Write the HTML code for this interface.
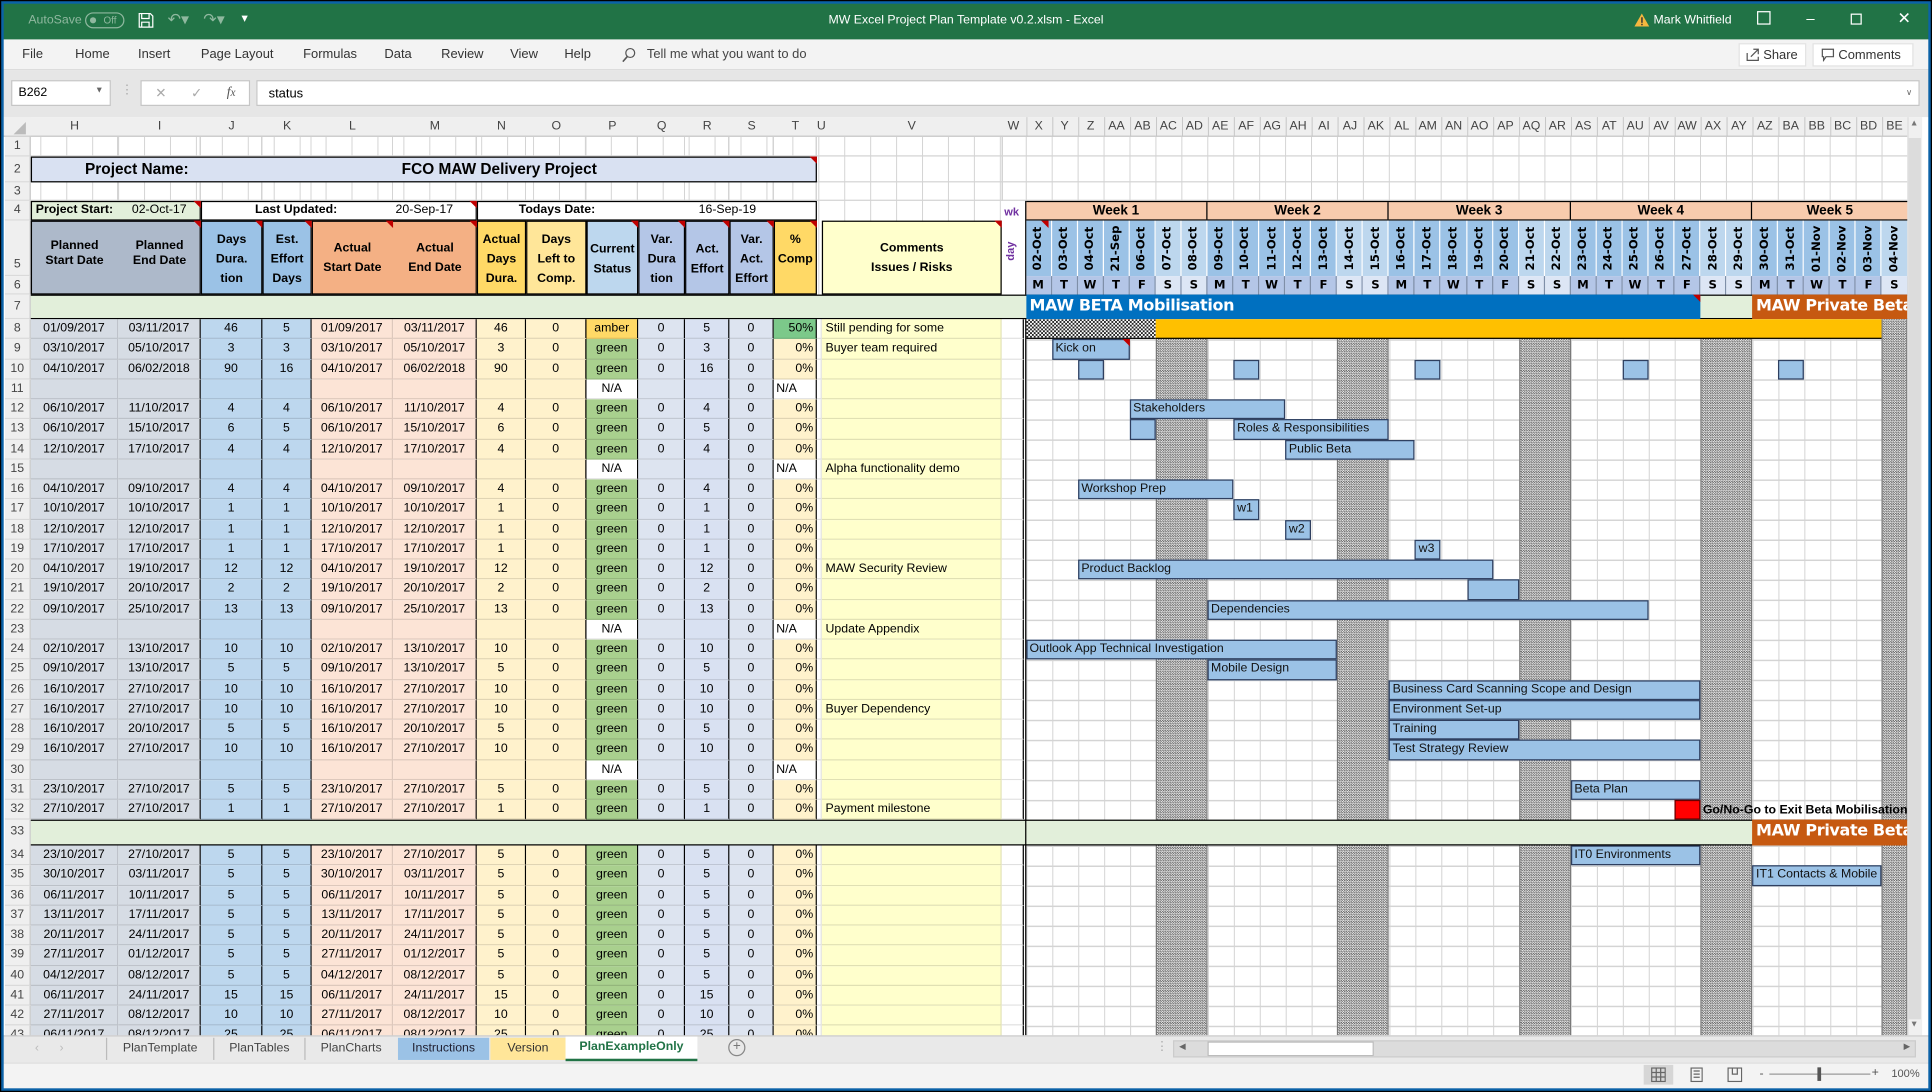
<!DOCTYPE html>
<html><head><meta charset="utf-8">
<style>
*{box-sizing:border-box;margin:0;padding:0}
html,body{width:1932px;height:1092px;overflow:hidden;background:#0b5a9c}
#w{position:absolute;left:0;top:0;width:1568px;height:886px;transform:scale(1.23214,1.23251);transform-origin:0 0;font-family:"Liberation Sans",sans-serif;color:#000;background:#fff;overflow:hidden}
.a{position:absolute}
#frame{left:0;top:0;width:1568px;height:886px;border:3px solid #0b62a8;outline:1px solid #000;outline-offset:-1px;pointer-events:none;z-index:50}
#tb{left:0;top:0;width:1568px;height:32px;background:#217346;color:#fff;font-size:10px}
#rib{left:0;top:32px;width:1568px;height:25px;background:#f3f3f3;font-size:10.5px;color:#333;border-bottom:1px solid #dcdcdc}
#fb{left:0;top:57px;width:1568px;height:38px;background:#e6e6e6}
.box{background:#fff;border:1px solid #c6c6c6}
#ch{left:0;top:95px;width:1548px;height:16px;background:#efefef;border-bottom:1px solid #c6c6c6;font-size:10px;color:#444}
#ch span{position:absolute;top:2px;text-align:center}
.rn{position:absolute;left:4px;width:21px;background:#efefef;font-size:10px;color:#444;text-align:center;border-right:1px solid #c6c6c6;border-bottom:1px solid #dadada}
.r{position:absolute;left:4px;height:16.25px;display:flex;font-size:10px;line-height:16px}
.r i{font-style:normal;text-align:center;white-space:nowrap;overflow:hidden;height:100%;border-bottom:1px solid rgba(0,0,0,.12);border-right:1px solid rgba(0,0,0,.12)}
.r i:nth-child(1){width:21px;background:#efefef;color:#444;border-right:1px solid #c6c6c6;border-bottom:1px solid #dadada}
.r i:nth-child(2){width:71px;background:#d6dce4}
.r i:nth-child(3){width:67px;background:#d6dce4;border-right:1px solid #000}
.r i:nth-child(4){width:50px;background:#bdd7ee;border-right:1px solid #000}
.r i:nth-child(5){width:40px;background:#bdd7ee;border-right:1px solid #000}
.r i:nth-child(6){width:66px;background:#fce4d6}
.r i:nth-child(7){width:68px;background:#fce4d6;border-right:1px solid #000}
.r i:nth-child(8){width:40px;background:#fff2cc;border-right:1px solid #000}
.r i:nth-child(9){width:49px;background:#fff2cc;border-right:1px solid #000}
.r i:nth-child(10){width:42px;background:#a9d08e;border-right:1px solid #000}
.r i:nth-child(11){width:38px;background:#dde4f0;border-right:1px solid #000}
.r i:nth-child(12){width:36px;background:#d9e1f2;border-right:1px solid #000}
.r i:nth-child(13){width:36px;background:#dde4f0;border-right:1px solid #000}
.r i:nth-child(14){width:35px;background:#fff2cc;text-align:right;padding-right:2px;border-right:1px solid #000}
.r i:nth-child(15){width:4px;background:#fff}
.r i:nth-child(16){width:146px;background:#ffffcc;text-align:left;padding-left:3px}
.r i:nth-child(17){width:18px;background:#fff;border-right:1px solid #000}
.r i.na{background:#fff}
.r i.l{text-align:left;padding-left:2px}
.r i.am{background:#ffd966}
.r i.pc{background:#7cc98a}
#gg{left:832.5px;width:715.5px;background-color:#fff;background-image:linear-gradient(90deg,#d4d4d4 1px,transparent 1px),linear-gradient(#d4d4d4 1px,transparent 1px);background-size:21.06px 100%,100% 16.25px}
.we{position:absolute;width:21.06px;background:repeating-conic-gradient(#6a6a6a 0 25%,#e8e8e8 0 50%) 0 0/2px 2px;border-left:1px solid #777;border-right:1px solid #777}
.b{position:absolute;height:16.25px;background:#9bc2e6;border:1px solid #2f3f5f;font-size:10px;line-height:14px;padding-left:2px;white-space:nowrap;overflow:visible;color:#111}
.hd{position:absolute;font-weight:bold;font-size:10px;text-align:center;line-height:1.2}
.dt{position:absolute;top:179px;height:45px;width:21.06px;border-right:1px solid #fff;display:flex;align-items:center;justify-content:center}
.dt span{writing-mode:vertical-rl;transform:rotate(180deg);font-family:"DejaVu Sans",sans-serif;font-weight:bold;font-size:9.5px}
.dl{position:absolute;top:224px;height:15px;width:21.06px;border-right:1px solid #7f8fa8;text-align:center;font-family:"DejaVu Sans",sans-serif;font-weight:bold;font-size:9.5px;line-height:15px}
.tab{position:absolute;top:842px;height:18px;font-size:10px;line-height:18px;text-align:center;color:#444}
</style></head><body><div id="w">

<div id="tb" class="a">
 <span class="a" style="left:23px;top:11px;color:#8fb89f">AutoSave</span>
 <span class="a" style="left:69px;top:10px;width:32px;height:13px;border:1px solid #8fb89f;border-radius:7px;color:#8fb89f;font-size:8px;line-height:11px;padding-left:14px">Off</span>
 <span class="a" style="left:73px;top:14px;width:5px;height:5px;border-radius:50%;background:#8fb89f"></span>
 <svg class="a" style="left:112px;top:10px" width="13" height="13" viewBox="0 0 13 13"><path d="M1 1h9l2 2v9H1z M3 1v4h6V1 M3 12V8h6v4" fill="none" stroke="#fff" stroke-width="1"/></svg>
 <span class="a" style="left:136px;top:8px;font-size:13px;color:#8fb89f">&#x21B6;&#x25BE;</span>
 <span class="a" style="left:165px;top:8px;font-size:13px;color:#8fb89f">&#x21B7;&#x25BE;</span>
 <span class="a" style="left:196px;top:10px;font-size:10px">&#x25BE;</span>
 <span class="a" style="left:0;width:1568px;top:11px;text-align:center">MW Excel Project Plan Template v0.2.xlsm  -  Excel</span>
 <svg class="a" style="left:1326px;top:10px" width="13" height="12"><path d="M6.5 1L12.5 11.5H0.5Z" fill="#f4b73f"/><rect x="6" y="4" width="1.2" height="4.5" fill="#333"/><rect x="6" y="9.3" width="1.2" height="1.2" fill="#333"/></svg>
 <span class="a" style="left:1342px;top:11px">Mark Whitfield</span>
 <span class="a" style="left:1426px;top:9px;width:11px;height:11px;border:1px solid #fff"></span>
 <span class="a" style="left:1466px;top:8px;font-size:12px">&#x2013;</span>
 <span class="a" style="left:1502px;top:11px;width:9px;height:9px;border:1px solid #fff"></span>
 <span class="a" style="left:1540px;top:7px;font-size:13px">&#x2715;</span>
</div>

<div id="rib" class="a">
 <span class="a" style="left:18px;top:6px">File</span>
 <span class="a" style="left:61px;top:6px">Home</span>
 <span class="a" style="left:112px;top:6px">Insert</span>
 <span class="a" style="left:163px;top:6px">Page Layout</span>
 <span class="a" style="left:246px;top:6px">Formulas</span>
 <span class="a" style="left:312px;top:6px">Data</span>
 <span class="a" style="left:358px;top:6px">Review</span>
 <span class="a" style="left:414px;top:6px">View</span>
 <span class="a" style="left:458px;top:6px">Help</span>
 <svg class="a" style="left:504px;top:6px" width="12" height="13"><circle cx="7.5" cy="5" r="3.6" fill="none" stroke="#555"/><path d="M5 8L1.5 12" stroke="#555" stroke-width="1.3"/></svg>
 <span class="a" style="left:525px;top:6px;color:#444">Tell me what you want to do</span>
 <span class="a box" style="left:1411px;top:3px;width:55px;height:19px;padding:3px 0 0 19px;color:#333;border-color:#e2e2e2">Share</span>
 <svg class="a" style="left:1417px;top:7px" width="11" height="11"><path d="M1 4v6h9V7 M4 7l6-6 M6 1h4v4" fill="none" stroke="#555"/></svg>
 <span class="a box" style="left:1471px;top:3px;width:82px;height:19px;padding:3px 0 0 20px;color:#333;border-color:#e2e2e2">Comments</span>
 <svg class="a" style="left:1478px;top:7px" width="11" height="11"><path d="M1 1h9v6H4L2 10V7H1z" fill="none" stroke="#555"/></svg>
</div>

<div id="fb" class="a">
 <div class="a box" style="left:9px;top:8px;width:81px;height:21px;font-size:10px;padding:4px 0 0 5px">B262<span style="position:absolute;right:5px;top:4px;font-size:7px;color:#666">&#x25BC;</span></div>
 <span class="a" style="left:98px;top:11px;color:#aaa;font-size:10px">&#x22EE;</span>
 <div class="a box" style="left:114px;top:8px;width:89px;height:21px;color:#aaa;font-size:11px"><span class="a" style="left:11px;top:3px">&#x2715;</span><span class="a" style="left:40px;top:3px">&#x2713;</span><span class="a" style="left:69px;top:3px;color:#555;font-style:italic;font-family:'Liberation Serif',serif">f<small>x</small></span></div>
 <div class="a box" style="left:208px;top:8px;width:1350px;height:21px;font-size:10.5px;padding:4px 0 0 9px">status<span style="position:absolute;right:5px;top:5px;font-size:7px;color:#666">&#x2228;</span></div>
</div>

<div id="ch" class="a">
 <span style="left:4px;width:21px;height:15px;top:0;background:#efefef"><svg width="12" height="12" style="position:absolute;left:6px;top:3px"><path d="M11 1V11H1Z" fill="#bbb"/></svg></span>
 <span style="left:25px;width:71px">H</span><span style="left:96px;width:67px">I</span><span style="left:163px;width:50px">J</span><span style="left:213px;width:40px">K</span><span style="left:253px;width:66px">L</span><span style="left:319px;width:68px">M</span><span style="left:387px;width:40px">N</span><span style="left:427px;width:49px">O</span><span style="left:476px;width:42px">P</span><span style="left:518px;width:38px">Q</span><span style="left:556px;width:36px">R</span><span style="left:592px;width:36px">S</span><span style="left:628px;width:35px">T</span><span style="left:663px;width:4px">U</span><span style="left:667px;width:146px">V</span><span style="left:813px;width:19px">W</span>
 <div class="a" style="left:832.5px;top:0;display:flex;height:16px;background-image:linear-gradient(90deg,#c6c6c6 1px,transparent 1px);background-size:21.06px 100%;width:716px">
 <b style="font-weight:normal;width:21.06px;text-align:center;padding-top:2px">X</b><b style="font-weight:normal;width:21.06px;text-align:center;padding-top:2px">Y</b><b style="font-weight:normal;width:21.06px;text-align:center;padding-top:2px">Z</b><b style="font-weight:normal;width:21.06px;text-align:center;padding-top:2px">AA</b><b style="font-weight:normal;width:21.06px;text-align:center;padding-top:2px">AB</b><b style="font-weight:normal;width:21.06px;text-align:center;padding-top:2px">AC</b><b style="font-weight:normal;width:21.06px;text-align:center;padding-top:2px">AD</b><b style="font-weight:normal;width:21.06px;text-align:center;padding-top:2px">AE</b><b style="font-weight:normal;width:21.06px;text-align:center;padding-top:2px">AF</b><b style="font-weight:normal;width:21.06px;text-align:center;padding-top:2px">AG</b><b style="font-weight:normal;width:21.06px;text-align:center;padding-top:2px">AH</b><b style="font-weight:normal;width:21.06px;text-align:center;padding-top:2px">AI</b><b style="font-weight:normal;width:21.06px;text-align:center;padding-top:2px">AJ</b><b style="font-weight:normal;width:21.06px;text-align:center;padding-top:2px">AK</b><b style="font-weight:normal;width:21.06px;text-align:center;padding-top:2px">AL</b><b style="font-weight:normal;width:21.06px;text-align:center;padding-top:2px">AM</b><b style="font-weight:normal;width:21.06px;text-align:center;padding-top:2px">AN</b><b style="font-weight:normal;width:21.06px;text-align:center;padding-top:2px">AO</b><b style="font-weight:normal;width:21.06px;text-align:center;padding-top:2px">AP</b><b style="font-weight:normal;width:21.06px;text-align:center;padding-top:2px">AQ</b><b style="font-weight:normal;width:21.06px;text-align:center;padding-top:2px">AR</b><b style="font-weight:normal;width:21.06px;text-align:center;padding-top:2px">AS</b><b style="font-weight:normal;width:21.06px;text-align:center;padding-top:2px">AT</b><b style="font-weight:normal;width:21.06px;text-align:center;padding-top:2px">AU</b><b style="font-weight:normal;width:21.06px;text-align:center;padding-top:2px">AV</b><b style="font-weight:normal;width:21.06px;text-align:center;padding-top:2px">AW</b><b style="font-weight:normal;width:21.06px;text-align:center;padding-top:2px">AX</b><b style="font-weight:normal;width:21.06px;text-align:center;padding-top:2px">AY</b><b style="font-weight:normal;width:21.06px;text-align:center;padding-top:2px">AZ</b><b style="font-weight:normal;width:21.06px;text-align:center;padding-top:2px">BA</b><b style="font-weight:normal;width:21.06px;text-align:center;padding-top:2px">BB</b><b style="font-weight:normal;width:21.06px;text-align:center;padding-top:2px">BC</b><b style="font-weight:normal;width:21.06px;text-align:center;padding-top:2px">BD</b><b style="font-weight:normal;width:21.06px;text-align:center;padding-top:2px">BE</b>
 </div>
</div>

<div class="a" style="left:25px;top:111px;width:1523px;height:128px;background-image:linear-gradient(90deg,#d4d4d4 1px,transparent 1px);background-size:21.06px 100%;background-position:807.5px 0"></div>
<div class="a" style="left:25px;top:111px;width:808px;height:52px;background:linear-gradient(90deg,transparent 70px,#d4d4d4 70px,#d4d4d4 71px,transparent 71px,transparent 137px,#d4d4d4 137px,#d4d4d4 138px,transparent 138px,transparent 187px,#d4d4d4 187px,#d4d4d4 188px,transparent 188px,transparent 227px,#d4d4d4 227px,#d4d4d4 228px,transparent 228px,transparent 293px,#d4d4d4 293px,#d4d4d4 294px,transparent 294px,transparent 361px,#d4d4d4 361px,#d4d4d4 362px,transparent 362px,transparent 401px,#d4d4d4 401px,#d4d4d4 402px,transparent 402px,transparent 450px,#d4d4d4 450px,#d4d4d4 451px,transparent 451px,transparent 492px,#d4d4d4 492px,#d4d4d4 493px,transparent 493px,transparent 530px,#d4d4d4 530px,#d4d4d4 531px,transparent 531px,transparent 566px,#d4d4d4 566px,#d4d4d4 567px,transparent 567px,transparent 602px,#d4d4d4 602px,#d4d4d4 603px,transparent 603px,transparent 637px,#d4d4d4 637px,#d4d4d4 638px,transparent 638px,transparent 788px,#d4d4d4 788px,#d4d4d4 789px,transparent 789px)"></div>
<div class="a" style="left:25px;top:126px;width:1523px;height:1px;background:#d4d4d4"></div>
<div class="a" style="left:25px;top:147px;width:1523px;height:1px;background:#d4d4d4"></div>
<div class="a" style="left:25px;top:162px;width:1523px;height:1px;background:#d4d4d4"></div>

<div class="rn" style="top:111px;height:16px;line-height:16px">1</div>
<div class="rn" style="top:127px;height:21px;line-height:21px">2</div>
<div class="rn" style="top:148px;height:15px;line-height:15px">3</div>
<div class="rn" style="top:163px;height:16px;line-height:16px">4</div>
<div class="rn" style="top:179px;height:45px;line-height:72px">5</div>
<div class="rn" style="top:224px;height:15px;line-height:15px">6</div>
<div class="rn" style="top:239px;height:20px;line-height:20px">7</div>

<div class="a" style="left:25px;top:127px;width:638px;height:21px;background:#d9e1f2;border:1px solid #000;font-weight:bold;font-size:12.5px;line-height:19px">
 <span class="a" style="left:43px">Project Name:</span><span class="a" style="left:300px">FCO MAW Delivery Project</span></div>
<span class="a" style="left:657px;top:127px;border-left:6px solid transparent;border-top:6px solid #c00000"></span>
<div class="a" style="left:25px;top:163px;width:138px;height:16px;background:#e2efda;border:1px solid #000;font-size:10px;line-height:14px"><b class="a" style="left:3px;font-weight:bold">Project Start:</b><span class="a" style="left:81px">02-Oct-17</span></div>
<div class="a" style="left:163px;top:163px;width:224px;height:16px;background:#fff;border:1px solid #000;font-size:10px;line-height:14px"><b class="a" style="left:43px">Last Updated:</b><span class="a" style="left:157px">20-Sep-17</span></div>
<div class="a" style="left:387px;top:163px;width:276px;height:16px;background:#fff;border:1px solid #000;font-size:10px;line-height:14px"><b class="a" style="left:33px">Todays Date:</b><span class="a" style="left:179px">16-Sep-19</span></div>
<span class="a" style="left:157px;top:163px;border-left:6px solid transparent;border-top:6px solid #c00000"></span>
<span class="a" style="left:381px;top:163px;border-left:6px solid transparent;border-top:6px solid #c00000"></span>

<div class="a" style="left:25px;top:179px;width:638px;height:60px;border:1px solid #000;background:#fff"></div>
<div class="hd" style="left:25px;top:179px;width:138px;height:60px;background:#adb9ca;border:1px solid #000"></div>
<div class="hd" style="left:25px;top:194px;width:71px;line-height:12px">Planned<br>Start Date</div>
<div class="hd" style="left:96px;top:194px;width:67px;line-height:12px">Planned<br>End Date</div>
<div class="hd" style="left:163px;top:179px;width:50px;height:60px;background:#9bc2e6;border:1px solid #000;padding-top:7px;line-height:16px">Days<br>Dura.<br>tion</div>
<div class="hd" style="left:213px;top:179px;width:40px;height:60px;background:#9bc2e6;border:1px solid #000;padding-top:7px;line-height:16px">Est.<br>Effort<br>Days</div>
<div class="hd" style="left:253px;top:179px;width:134px;height:60px;background:#f4b084;border:1px solid #000"></div>
<div class="hd" style="left:253px;top:194px;width:66px;line-height:16px">Actual<br>Start Date</div>
<div class="hd" style="left:319px;top:194px;width:68px;line-height:16px">Actual<br>End Date</div>
<div class="hd" style="left:387px;top:179px;width:40px;height:60px;background:#ffd966;border:1px solid #000;padding-top:7px;line-height:16px">Actual<br>Days<br>Dura.</div>
<div class="hd" style="left:427px;top:179px;width:49px;height:60px;background:#ffe699;border:1px solid #000;padding-top:7px;line-height:16px">Days<br>Left to<br>Comp.</div>
<div class="hd" style="left:476px;top:179px;width:42px;height:60px;background:#bdd7ee;border:1px solid #000;padding-top:15px;line-height:16px">Current<br>Status</div>
<div class="hd" style="left:518px;top:179px;width:38px;height:60px;background:#b4c6e7;border:1px solid #000;padding-top:7px;line-height:16px">Var.<br>Dura<br>tion</div>
<div class="hd" style="left:556px;top:179px;width:36px;height:60px;background:#b4c6e7;border:1px solid #000;padding-top:15px;line-height:16px">Act.<br>Effort</div>
<div class="hd" style="left:592px;top:179px;width:36px;height:60px;background:#b4c6e7;border:1px solid #000;padding-top:7px;line-height:16px">Var.<br>Act.<br>Effort</div>
<div class="hd" style="left:628px;top:179px;width:35px;height:60px;background:#ffd966;border:1px solid #000;padding-top:7px;line-height:16px">%<br>Comp</div>
<div class="hd" style="left:667px;top:179px;width:146px;height:60px;background:#ffffcc;border:1px solid #000;padding-top:14px;line-height:16px">Comments<br>Issues / Risks</div>
<span class="a" style="left:157px;top:179px;border-left:6px solid transparent;border-top:6px solid #c00000"></span>
<span class="a" style="left:207px;top:179px;border-left:6px solid transparent;border-top:6px solid #c00000"></span>
<span class="a" style="left:247px;top:179px;border-left:6px solid transparent;border-top:6px solid #c00000"></span>
<span class="a" style="left:313px;top:179px;border-left:6px solid transparent;border-top:6px solid #c00000"></span>
<span class="a" style="left:381px;top:179px;border-left:6px solid transparent;border-top:6px solid #c00000"></span>
<span class="a" style="left:512px;top:179px;border-left:6px solid transparent;border-top:6px solid #c00000"></span>
<span class="a" style="left:550px;top:179px;border-left:6px solid transparent;border-top:6px solid #c00000"></span>
<span class="a" style="left:586px;top:179px;border-left:6px solid transparent;border-top:6px solid #c00000"></span>
<span class="a" style="left:622px;top:179px;border-left:6px solid transparent;border-top:6px solid #c00000"></span>
<span class="a" style="left:657px;top:179px;border-left:6px solid transparent;border-top:6px solid #c00000"></span>
<span class="a" style="left:807px;top:179px;border-left:6px solid transparent;border-top:6px solid #c00000"></span>
<span class="a" style="left:815px;top:167px;font-size:9px;font-weight:bold;color:#7030a0">wk</span>
<span class="a" style="left:815px;top:196px;font-size:9px;font-weight:bold;color:#7030a0;writing-mode:vertical-rl;transform:rotate(180deg)">day</span>

<div class="a" style="left:832.5px;top:163px;width:716px;height:16px;background:#f8cbad;border-top:1px solid #000;border-bottom:1px solid #000;font-weight:bold;font-size:11px;line-height:15px;font-family:'Liberation Sans',sans-serif">
 <span class="a" style="left:0;width:147.4px;text-align:center;border-right:1px solid #000;height:14px">Week 1</span>
 <span class="a" style="left:147.4px;width:147.4px;text-align:center;border-right:1px solid #000;height:14px">Week 2</span>
 <span class="a" style="left:294.8px;width:147.4px;text-align:center;border-right:1px solid #000;height:14px">Week 3</span>
 <span class="a" style="left:442.2px;width:147.4px;text-align:center;border-right:1px solid #000;height:14px">Week 4</span>
 <span class="a" style="left:589.6px;width:126px;text-align:center;height:14px">Week 5</span>
</div>
<div class="a" style="left:831.5px;top:163px;width:1px;height:76px;background:#000"></div>

<div class="dt" style="left:832.5px;background:#9bc2e6"><span>02-Oct</span></div>
<div class="dt" style="left:853.56px;background:#9bc2e6"><span>03-Oct</span></div>
<div class="dt" style="left:874.62px;background:#9bc2e6"><span>04-Oct</span></div>
<div class="dt" style="left:895.68px;background:#9bc2e6"><span>21-Sep</span></div>
<div class="dt" style="left:916.74px;background:#9bc2e6"><span>06-Oct</span></div>
<div class="dt" style="left:937.8px;background:#bdd7ee"><span>07-Oct</span></div>
<div class="dt" style="left:958.86px;background:#bdd7ee"><span>08-Oct</span></div>
<div class="dt" style="left:979.92px;background:#9bc2e6"><span>09-Oct</span></div>
<div class="dt" style="left:1000.98px;background:#9bc2e6"><span>10-Oct</span></div>
<div class="dt" style="left:1022.04px;background:#9bc2e6"><span>11-Oct</span></div>
<div class="dt" style="left:1043.1px;background:#9bc2e6"><span>12-Oct</span></div>
<div class="dt" style="left:1064.16px;background:#9bc2e6"><span>13-Oct</span></div>
<div class="dt" style="left:1085.22px;background:#bdd7ee"><span>14-Oct</span></div>
<div class="dt" style="left:1106.28px;background:#bdd7ee"><span>15-Oct</span></div>
<div class="dt" style="left:1127.34px;background:#9bc2e6"><span>16-Oct</span></div>
<div class="dt" style="left:1148.4px;background:#9bc2e6"><span>17-Oct</span></div>
<div class="dt" style="left:1169.46px;background:#9bc2e6"><span>18-Oct</span></div>
<div class="dt" style="left:1190.52px;background:#9bc2e6"><span>19-Oct</span></div>
<div class="dt" style="left:1211.58px;background:#9bc2e6"><span>20-Oct</span></div>
<div class="dt" style="left:1232.64px;background:#bdd7ee"><span>21-Oct</span></div>
<div class="dt" style="left:1253.7px;background:#bdd7ee"><span>22-Oct</span></div>
<div class="dt" style="left:1274.76px;background:#9bc2e6"><span>23-Oct</span></div>
<div class="dt" style="left:1295.82px;background:#9bc2e6"><span>24-Oct</span></div>
<div class="dt" style="left:1316.88px;background:#9bc2e6"><span>25-Oct</span></div>
<div class="dt" style="left:1337.94px;background:#9bc2e6"><span>26-Oct</span></div>
<div class="dt" style="left:1359px;background:#9bc2e6"><span>27-Oct</span></div>
<div class="dt" style="left:1380.06px;background:#bdd7ee"><span>28-Oct</span></div>
<div class="dt" style="left:1401.12px;background:#bdd7ee"><span>29-Oct</span></div>
<div class="dt" style="left:1422.18px;background:#9bc2e6"><span>30-Oct</span></div>
<div class="dt" style="left:1443.24px;background:#9bc2e6"><span>31-Oct</span></div>
<div class="dt" style="left:1464.3px;background:#9bc2e6"><span>01-Nov</span></div>
<div class="dt" style="left:1485.36px;background:#9bc2e6"><span>02-Nov</span></div>
<div class="dt" style="left:1506.42px;background:#9bc2e6"><span>03-Nov</span></div>
<div class="dt" style="left:1527.48px;background:#bdd7ee"><span>04-Nov</span></div>
<span class="a" style="left:845px;top:179px;border-left:6px solid transparent;border-top:6px solid #c00000"></span>

<div class="dl" style="left:832.5px;background:#b4c6e7">M</div><div class="dl" style="left:853.56px;background:#b4c6e7">T</div><div class="dl" style="left:874.62px;background:#b4c6e7">W</div><div class="dl" style="left:895.68px;background:#b4c6e7">T</div><div class="dl" style="left:916.74px;background:#b4c6e7">F</div><div class="dl" style="left:937.8px;background:#dde6f5">S</div><div class="dl" style="left:958.86px;background:#dde6f5">S</div>
<div class="dl" style="left:979.92px;background:#b4c6e7">M</div><div class="dl" style="left:1000.98px;background:#b4c6e7">T</div><div class="dl" style="left:1022.04px;background:#b4c6e7">W</div><div class="dl" style="left:1043.1px;background:#b4c6e7">T</div><div class="dl" style="left:1064.16px;background:#b4c6e7">F</div><div class="dl" style="left:1085.22px;background:#dde6f5">S</div><div class="dl" style="left:1106.28px;background:#dde6f5">S</div>
<div class="dl" style="left:1127.34px;background:#b4c6e7">M</div><div class="dl" style="left:1148.4px;background:#b4c6e7">T</div><div class="dl" style="left:1169.46px;background:#b4c6e7">W</div><div class="dl" style="left:1190.52px;background:#b4c6e7">T</div><div class="dl" style="left:1211.58px;background:#b4c6e7">F</div><div class="dl" style="left:1232.64px;background:#dde6f5">S</div><div class="dl" style="left:1253.7px;background:#dde6f5">S</div>
<div class="dl" style="left:1274.76px;background:#b4c6e7">M</div><div class="dl" style="left:1295.82px;background:#b4c6e7">T</div><div class="dl" style="left:1316.88px;background:#b4c6e7">W</div><div class="dl" style="left:1337.94px;background:#b4c6e7">T</div><div class="dl" style="left:1359px;background:#b4c6e7">F</div><div class="dl" style="left:1380.06px;background:#dde6f5">S</div><div class="dl" style="left:1401.12px;background:#dde6f5">S</div>
<div class="dl" style="left:1422.18px;background:#b4c6e7">M</div><div class="dl" style="left:1443.24px;background:#b4c6e7">T</div><div class="dl" style="left:1464.3px;background:#b4c6e7">W</div><div class="dl" style="left:1485.36px;background:#b4c6e7">T</div><div class="dl" style="left:1506.42px;background:#b4c6e7">F</div><div class="dl" style="left:1527.48px;background:#dde6f5">S</div>

<div class="a" style="left:25px;top:239px;width:1523px;height:20px;background:#e2efda;border-top:1px solid #000;border-bottom:1px solid #000"></div>
<div class="a" style="left:832.5px;top:239px;width:547.5px;height:20px;background:#0070c0;color:#fff;font-weight:bold;font-size:13px;line-height:20px;padding-left:3px;font-family:'DejaVu Sans',sans-serif;letter-spacing:-.3px">MAW BETA Mobilisation</div>
<span class="a" style="left:1374px;top:239px;border-left:6px solid transparent;border-top:6px solid #c00000"></span>
<div class="a" style="left:1422.2px;top:239px;width:126px;height:20px;background:#c65911;color:#fff;font-weight:bold;font-size:13px;line-height:20px;padding-left:3px;font-family:'DejaVu Sans',sans-serif;white-space:nowrap;overflow:hidden;letter-spacing:-.3px">MAW Private Beta</div>

<div id="gg" class="a" style="top:259px;height:406.25px"></div>
<div class="a" style="left:832.5px;width:715.5px;top:686px;height:154px;background-color:#fff;background-image:linear-gradient(90deg,#d4d4d4 1px,transparent 1px),linear-gradient(#d4d4d4 1px,transparent 1px);background-size:21.06px 100%,100% 16.25px"></div>
<div class="we" style="left:937.8px;top:275px;width:42.12px;height:390px"></div>
<div class="we" style="left:1085.22px;top:275px;width:42.12px;height:390px"></div>
<div class="we" style="left:1232.64px;top:275px;width:42.12px;height:390px"></div>
<div class="we" style="left:1380.06px;top:275px;width:42.12px;height:390px"></div>
<div class="we" style="left:1527.48px;top:259px;width:21px;height:406px"></div>
<div class="we" style="left:937.8px;top:686px;width:42.12px;height:154px"></div>
<div class="we" style="left:1085.22px;top:686px;width:42.12px;height:154px"></div>
<div class="we" style="left:1232.64px;top:686px;width:42.12px;height:154px"></div>
<div class="we" style="left:1380.06px;top:686px;width:42.12px;height:154px"></div>
<div class="we" style="left:1527.48px;top:686px;width:21px;height:154px"></div>

<div class="a" style="left:832.5px;top:259px;width:105.3px;height:16.25px;background:repeating-conic-gradient(#222 0 25%,#fff 0 50%) 0 0/3px 3px;border-bottom:1px solid #000"></div>
<div class="a" style="left:937.8px;top:259px;width:589.7px;height:16.25px;background:#ffc000;border-bottom:1px solid #000"></div>

<div class="b" style="left:853.6px;top:275.25px;width:63.2px">Kick on</div>
<span class="a" style="left:910.5px;top:275.25px;border-left:6px solid transparent;border-top:6px solid #c00000"></span>
<div class="b" style="left:874.6px;top:291.5px;width:21.06px"></div>
<div class="b" style="left:1001px;top:291.5px;width:21.06px"></div>
<div class="b" style="left:1148.4px;top:291.5px;width:21.06px"></div>
<div class="b" style="left:1316.9px;top:291.5px;width:21.06px"></div>
<div class="b" style="left:1443.2px;top:291.5px;width:21.06px"></div>
<div class="b" style="left:916.7px;top:324px;width:126.4px">Stakeholders</div>
<div class="b" style="left:916.7px;top:340.25px;width:21.06px"></div>
<div class="b" style="left:1001px;top:340.25px;width:126.4px">Roles &amp; Responsibilities</div>
<div class="b" style="left:1043.1px;top:356.5px;width:105.3px">Public Beta</div>
<div class="b" style="left:874.6px;top:389px;width:126.4px">Workshop Prep</div>
<div class="b" style="left:1001px;top:405.25px;width:21.06px">w1</div>
<div class="b" style="left:1043.1px;top:421.5px;width:21.06px">w2</div>
<div class="b" style="left:1148.4px;top:437.75px;width:21.06px">w3</div>
<div class="b" style="left:874.6px;top:454px;width:337px">Product Backlog</div>
<div class="b" style="left:1190.5px;top:470.25px;width:42.1px"></div>
<div class="b" style="left:979.9px;top:486.5px;width:358px">Dependencies</div>
<div class="b" style="left:832.5px;top:519px;width:252.7px">Outlook App Technical Investigation</div>
<div class="b" style="left:979.9px;top:535.25px;width:105.3px">Mobile Design</div>
<div class="b" style="left:1127.3px;top:551.5px;width:252.7px">Business Card Scanning Scope and Design</div>
<div class="b" style="left:1127.3px;top:567.75px;width:252.7px">Environment Set-up</div>
<div class="b" style="left:1127.3px;top:584px;width:105.3px">Training</div>
<div class="b" style="left:1127.3px;top:600.25px;width:252.7px">Test Strategy Review</div>
<div class="b" style="left:1274.8px;top:632.75px;width:105.3px">Beta Plan</div>
<div class="a" style="left:1359px;top:649px;width:21.06px;height:16.25px;background:#ff0000;border:1px solid #600"></div>
<div class="a" style="left:1382px;top:649px;width:166px;height:16.25px;font-size:10px;font-weight:bold;line-height:17px;white-space:nowrap;overflow:hidden">Go/No-Go to Exit Beta Mobilisation</div>
<div class="b" style="left:1274.8px;top:686px;width:105.3px">IT0 Environments</div>
<div class="b" style="left:1422.2px;top:702.25px;width:105.3px">IT1 Contacts &amp; Mobile</div>

<div class="a" style="left:4px;top:665.25px;width:21px;height:20.75px;background:#efefef;font-size:10px;color:#444;text-align:center;line-height:20px;border-right:1px solid #c6c6c6">33</div>
<div class="a" style="left:25px;top:665.25px;width:1523px;height:20.75px;background:#e2efda;border-top:1px solid #000;border-bottom:1px solid #000"></div>
<div class="a" style="left:1422.2px;top:665.25px;width:126px;height:20.75px;background:#c65911;color:#fff;font-weight:bold;font-size:13px;line-height:20px;padding-left:3px;font-family:'DejaVu Sans',sans-serif;white-space:nowrap;overflow:hidden;letter-spacing:-.3px">MAW Private Beta</div>
<div class="a" style="left:831.5px;top:259px;width:1px;height:581px;background:#000"></div>

<div class="r" style="top:259px"><i>8</i><i>01/09/2017</i><i>03/11/2017</i><i>46</i><i>5</i><i>01/09/2017</i><i>03/11/2017</i><i>46</i><i>0</i><i class="am">amber</i><i>0</i><i>5</i><i>0</i><i class="pc">50%</i><i></i><i>Still pending for some</i><i></i></div>
<div class="r" style="top:275.25px"><i>9</i><i>03/10/2017</i><i>05/10/2017</i><i>3</i><i>3</i><i>03/10/2017</i><i>05/10/2017</i><i>3</i><i>0</i><i>green</i><i>0</i><i>3</i><i>0</i><i>0%</i><i></i><i>Buyer team required</i><i></i></div>
<div class="r" style="top:291.5px"><i>10</i><i>04/10/2017</i><i>06/02/2018</i><i>90</i><i>16</i><i>04/10/2017</i><i>06/02/2018</i><i>90</i><i>0</i><i>green</i><i>0</i><i>16</i><i>0</i><i>0%</i><i></i><i></i><i></i></div>
<div class="r" style="top:307.75px"><i>11</i><i></i><i></i><i></i><i></i><i></i><i></i><i></i><i></i><i class="na">N/A</i><i></i><i></i><i>0</i><i class="na l">N/A</i><i></i><i></i><i></i></div>
<div class="r" style="top:324px"><i>12</i><i>06/10/2017</i><i>11/10/2017</i><i>4</i><i>4</i><i>06/10/2017</i><i>11/10/2017</i><i>4</i><i>0</i><i>green</i><i>0</i><i>4</i><i>0</i><i>0%</i><i></i><i></i><i></i></div>
<div class="r" style="top:340.25px"><i>13</i><i>06/10/2017</i><i>15/10/2017</i><i>6</i><i>5</i><i>06/10/2017</i><i>15/10/2017</i><i>6</i><i>0</i><i>green</i><i>0</i><i>5</i><i>0</i><i>0%</i><i></i><i></i><i></i></div>
<div class="r" style="top:356.5px"><i>14</i><i>12/10/2017</i><i>17/10/2017</i><i>4</i><i>4</i><i>12/10/2017</i><i>17/10/2017</i><i>4</i><i>0</i><i>green</i><i>0</i><i>4</i><i>0</i><i>0%</i><i></i><i></i><i></i></div>
<div class="r" style="top:372.75px"><i>15</i><i></i><i></i><i></i><i></i><i></i><i></i><i></i><i></i><i class="na">N/A</i><i></i><i></i><i>0</i><i class="na l">N/A</i><i></i><i>Alpha functionality demo</i><i></i></div>
<div class="r" style="top:389px"><i>16</i><i>04/10/2017</i><i>09/10/2017</i><i>4</i><i>4</i><i>04/10/2017</i><i>09/10/2017</i><i>4</i><i>0</i><i>green</i><i>0</i><i>4</i><i>0</i><i>0%</i><i></i><i></i><i></i></div>
<div class="r" style="top:405.25px"><i>17</i><i>10/10/2017</i><i>10/10/2017</i><i>1</i><i>1</i><i>10/10/2017</i><i>10/10/2017</i><i>1</i><i>0</i><i>green</i><i>0</i><i>1</i><i>0</i><i>0%</i><i></i><i></i><i></i></div>
<div class="r" style="top:421.5px"><i>18</i><i>12/10/2017</i><i>12/10/2017</i><i>1</i><i>1</i><i>12/10/2017</i><i>12/10/2017</i><i>1</i><i>0</i><i>green</i><i>0</i><i>1</i><i>0</i><i>0%</i><i></i><i></i><i></i></div>
<div class="r" style="top:437.75px"><i>19</i><i>17/10/2017</i><i>17/10/2017</i><i>1</i><i>1</i><i>17/10/2017</i><i>17/10/2017</i><i>1</i><i>0</i><i>green</i><i>0</i><i>1</i><i>0</i><i>0%</i><i></i><i></i><i></i></div>
<div class="r" style="top:454px"><i>20</i><i>04/10/2017</i><i>19/10/2017</i><i>12</i><i>12</i><i>04/10/2017</i><i>19/10/2017</i><i>12</i><i>0</i><i>green</i><i>0</i><i>12</i><i>0</i><i>0%</i><i></i><i>MAW Security Review</i><i></i></div>
<div class="r" style="top:470.25px"><i>21</i><i>19/10/2017</i><i>20/10/2017</i><i>2</i><i>2</i><i>19/10/2017</i><i>20/10/2017</i><i>2</i><i>0</i><i>green</i><i>0</i><i>2</i><i>0</i><i>0%</i><i></i><i></i><i></i></div>
<div class="r" style="top:486.5px"><i>22</i><i>09/10/2017</i><i>25/10/2017</i><i>13</i><i>13</i><i>09/10/2017</i><i>25/10/2017</i><i>13</i><i>0</i><i>green</i><i>0</i><i>13</i><i>0</i><i>0%</i><i></i><i></i><i></i></div>
<div class="r" style="top:502.75px"><i>23</i><i></i><i></i><i></i><i></i><i></i><i></i><i></i><i></i><i class="na">N/A</i><i></i><i></i><i>0</i><i class="na l">N/A</i><i></i><i>Update Appendix</i><i></i></div>
<div class="r" style="top:519px"><i>24</i><i>02/10/2017</i><i>13/10/2017</i><i>10</i><i>10</i><i>02/10/2017</i><i>13/10/2017</i><i>10</i><i>0</i><i>green</i><i>0</i><i>10</i><i>0</i><i>0%</i><i></i><i></i><i></i></div>
<div class="r" style="top:535.25px"><i>25</i><i>09/10/2017</i><i>13/10/2017</i><i>5</i><i>5</i><i>09/10/2017</i><i>13/10/2017</i><i>5</i><i>0</i><i>green</i><i>0</i><i>5</i><i>0</i><i>0%</i><i></i><i></i><i></i></div>
<div class="r" style="top:551.5px"><i>26</i><i>16/10/2017</i><i>27/10/2017</i><i>10</i><i>10</i><i>16/10/2017</i><i>27/10/2017</i><i>10</i><i>0</i><i>green</i><i>0</i><i>10</i><i>0</i><i>0%</i><i></i><i></i><i></i></div>
<div class="r" style="top:567.75px"><i>27</i><i>16/10/2017</i><i>27/10/2017</i><i>10</i><i>10</i><i>16/10/2017</i><i>27/10/2017</i><i>10</i><i>0</i><i>green</i><i>0</i><i>10</i><i>0</i><i>0%</i><i></i><i>Buyer Dependency</i><i></i></div>
<div class="r" style="top:584px"><i>28</i><i>16/10/2017</i><i>20/10/2017</i><i>5</i><i>5</i><i>16/10/2017</i><i>20/10/2017</i><i>5</i><i>0</i><i>green</i><i>0</i><i>5</i><i>0</i><i>0%</i><i></i><i></i><i></i></div>
<div class="r" style="top:600.25px"><i>29</i><i>16/10/2017</i><i>27/10/2017</i><i>10</i><i>10</i><i>16/10/2017</i><i>27/10/2017</i><i>10</i><i>0</i><i>green</i><i>0</i><i>10</i><i>0</i><i>0%</i><i></i><i></i><i></i></div>
<div class="r" style="top:616.5px"><i>30</i><i></i><i></i><i></i><i></i><i></i><i></i><i></i><i></i><i class="na">N/A</i><i></i><i></i><i>0</i><i class="na l">N/A</i><i></i><i></i><i></i></div>
<div class="r" style="top:632.75px"><i>31</i><i>23/10/2017</i><i>27/10/2017</i><i>5</i><i>5</i><i>23/10/2017</i><i>27/10/2017</i><i>5</i><i>0</i><i>green</i><i>0</i><i>5</i><i>0</i><i>0%</i><i></i><i></i><i></i></div>
<div class="r" style="top:649px"><i>32</i><i>27/10/2017</i><i>27/10/2017</i><i>1</i><i>1</i><i>27/10/2017</i><i>27/10/2017</i><i>1</i><i>0</i><i>green</i><i>0</i><i>1</i><i>0</i><i>0%</i><i></i><i>Payment milestone</i><i></i></div>
<div class="r" style="top:686px"><i>34</i><i>23/10/2017</i><i>27/10/2017</i><i>5</i><i>5</i><i>23/10/2017</i><i>27/10/2017</i><i>5</i><i>0</i><i>green</i><i>0</i><i>5</i><i>0</i><i>0%</i><i></i><i></i><i></i></div>
<div class="r" style="top:702.25px"><i>35</i><i>30/10/2017</i><i>03/11/2017</i><i>5</i><i>5</i><i>30/10/2017</i><i>03/11/2017</i><i>5</i><i>0</i><i>green</i><i>0</i><i>5</i><i>0</i><i>0%</i><i></i><i></i><i></i></div>
<div class="r" style="top:718.5px"><i>36</i><i>06/11/2017</i><i>10/11/2017</i><i>5</i><i>5</i><i>06/11/2017</i><i>10/11/2017</i><i>5</i><i>0</i><i>green</i><i>0</i><i>5</i><i>0</i><i>0%</i><i></i><i></i><i></i></div>
<div class="r" style="top:734.75px"><i>37</i><i>13/11/2017</i><i>17/11/2017</i><i>5</i><i>5</i><i>13/11/2017</i><i>17/11/2017</i><i>5</i><i>0</i><i>green</i><i>0</i><i>5</i><i>0</i><i>0%</i><i></i><i></i><i></i></div>
<div class="r" style="top:751px"><i>38</i><i>20/11/2017</i><i>24/11/2017</i><i>5</i><i>5</i><i>20/11/2017</i><i>24/11/2017</i><i>5</i><i>0</i><i>green</i><i>0</i><i>5</i><i>0</i><i>0%</i><i></i><i></i><i></i></div>
<div class="r" style="top:767.25px"><i>39</i><i>27/11/2017</i><i>01/12/2017</i><i>5</i><i>5</i><i>27/11/2017</i><i>01/12/2017</i><i>5</i><i>0</i><i>green</i><i>0</i><i>5</i><i>0</i><i>0%</i><i></i><i></i><i></i></div>
<div class="r" style="top:783.5px"><i>40</i><i>04/12/2017</i><i>08/12/2017</i><i>5</i><i>5</i><i>04/12/2017</i><i>08/12/2017</i><i>5</i><i>0</i><i>green</i><i>0</i><i>5</i><i>0</i><i>0%</i><i></i><i></i><i></i></div>
<div class="r" style="top:799.75px"><i>41</i><i>06/11/2017</i><i>24/11/2017</i><i>15</i><i>15</i><i>06/11/2017</i><i>24/11/2017</i><i>15</i><i>0</i><i>green</i><i>0</i><i>15</i><i>0</i><i>0%</i><i></i><i></i><i></i></div>
<div class="r" style="top:816px"><i>42</i><i>27/11/2017</i><i>08/12/2017</i><i>10</i><i>10</i><i>27/11/2017</i><i>08/12/2017</i><i>10</i><i>0</i><i>green</i><i>0</i><i>10</i><i>0</i><i>0%</i><i></i><i></i><i></i></div>
<div class="r" style="top:832.25px"><i>43</i><i>06/11/2017</i><i>08/12/2017</i><i>25</i><i>25</i><i>06/11/2017</i><i>08/12/2017</i><i>25</i><i>0</i><i>green</i><i>0</i><i>25</i><i>0</i><i>0%</i><i></i><i></i><i></i></div>

<div class="a" style="left:1548px;top:95px;width:12px;height:745px;background:#f0f0f0;border-left:1px solid #ddd"></div>
<div class="a" style="left:1549px;top:112px;width:10px;height:715px;background:#dcdcdc"></div>
<span class="a" style="left:1550px;top:97px;font-size:7px;color:#777">&#x25B2;</span>
<span class="a" style="left:1550px;top:828px;font-size:7px;color:#777">&#x25BC;</span>

<div class="a" style="left:0;top:840px;width:1568px;height:22px;background:#e9e9e9;border-top:1px solid #ccc"></div>
<span class="tab" style="left:24px;width:12px;color:#bbb">&#x2039;</span><span class="tab" style="left:44px;width:12px;color:#bbb">&#x203A;</span>
<span class="tab" style="left:86px;width:87px;border-left:1px solid #bbb">PlanTemplate</span>
<span class="tab" style="left:173px;width:74px;border-left:1px solid #bbb">PlanTables</span>
<span class="tab" style="left:247px;width:75px;border-left:1px solid #bbb">PlanCharts</span>
<span class="tab" style="left:323px;width:74px;background:#9bc2e6;color:#223">Instructions</span>
<span class="tab" style="left:398px;width:61px;background:#ffe699;color:#333">Version</span>
<span class="tab" style="left:459px;width:107px;background:#fff;color:#217346;font-weight:bold;border-bottom:2px solid #217346;top:841px;height:20px">PlanExampleOnly</span>
<span class="a" style="left:591px;top:843px;width:14px;height:14px;border:1px solid #888;border-radius:50%;font-size:11px;line-height:11px;text-align:center;color:#777">+</span>
<span class="a" style="left:938px;top:844px;color:#aaa;font-size:10px">&#x22EE;</span>
<div class="a" style="left:952px;top:844px;width:603px;height:14px;background:#dcdcdc;border:1px solid #ccc"></div>
<div class="a" style="left:980px;top:845px;width:135px;height:12px;background:#fff;border:1px solid #bbb"></div>
<span class="a" style="left:957px;top:845px;font-size:7px;color:#666">&#x25C0;</span>
<span class="a" style="left:1545px;top:845px;font-size:7px;color:#666">&#x25B6;</span>

<div class="a" style="left:0;top:862px;width:1568px;height:24px;background:#f3f3f3;border-top:1px solid #ddd"></div>
<div class="a" style="left:1334px;top:864px;width:24px;height:16px;background:#d6d6d6"></div>
<svg class="a" style="left:1340px;top:866px" width="12" height="12"><path d="M0.5 0.5h11v11h-11z M0.5 4.2h11 M0.5 7.8h11 M4.2 0.5v11 M7.8 0.5v11" fill="none" stroke="#666"/></svg>
<svg class="a" style="left:1372px;top:866px" width="10" height="12"><path d="M0.5 0.5h9v11h-9z M2.5 3h5 M2.5 5.5h5 M2.5 8h5" fill="none" stroke="#666"/></svg>
<svg class="a" style="left:1402px;top:866px" width="12" height="12"><path d="M0.5 0.5h11v11h-11z M4 0.5v5h4v-5" fill="none" stroke="#666"/></svg>
<span class="a" style="left:1428px;top:866px;font-size:10px;color:#555">-</span>
<div class="a" style="left:1436px;top:871px;width:82px;height:1px;background:#999"></div>
<div class="a" style="left:1475px;top:866px;width:3px;height:11px;background:#555"></div>
<span class="a" style="left:1519px;top:865px;font-size:10px;color:#555">+</span>
<span class="a" style="left:1535px;top:866px;font-size:9px;color:#555">100%</span>

<div id="frame" class="a"></div>
</div></body></html>
